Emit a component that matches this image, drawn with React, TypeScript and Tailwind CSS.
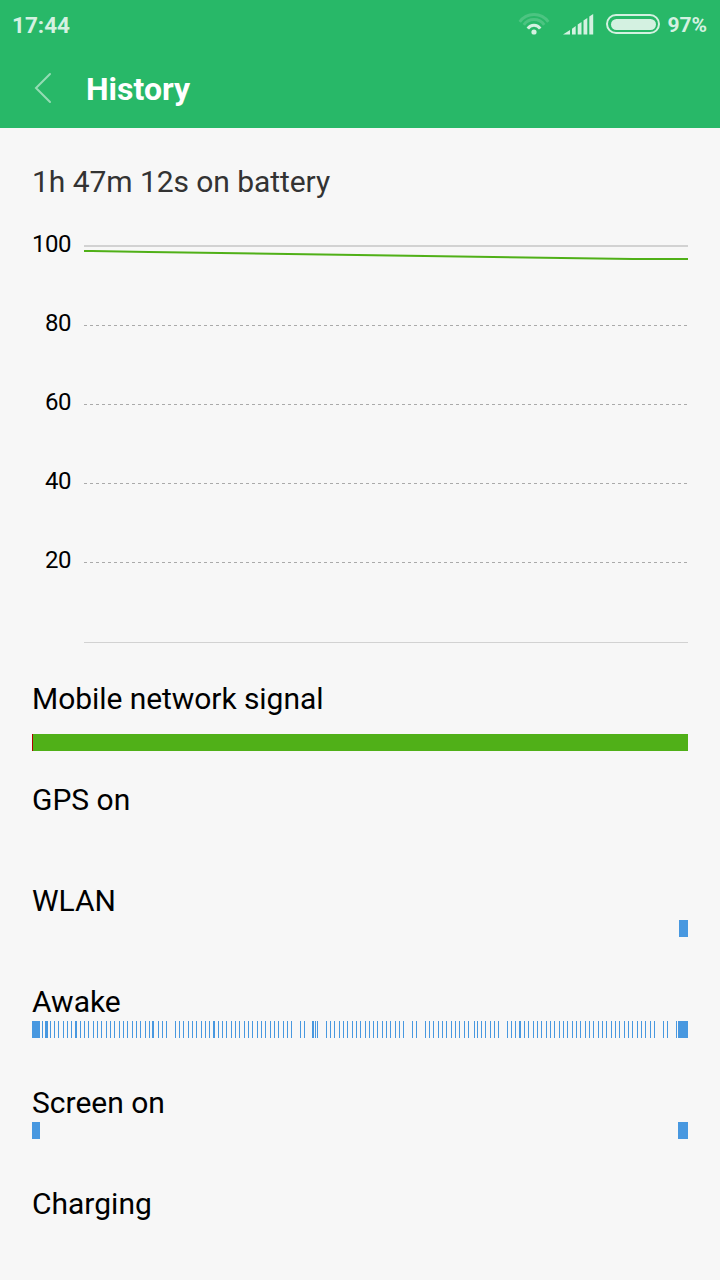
import React from 'react';

type Span = [start: number, width?: number];

interface HistoryRow {
  label: string;
  color: string;
  spans: Span[];
}

const LEVELS = [80, 60, 40, 20];

// offsets from the left edge of the 656px track
const AWAKE: Span[] = [
  [0, 8], [10], [13, 3], [18], [22], [26], [31], [35], [39], [43, 2], [48], [52], [56], [61], [65], [69],
  [74], [78], [82], [87], [91], [95], [100], [104], [108], [113], [117], [120, 2], [126], [130], [134],
  [143], [147], [151], [156], [160], [164], [169], [173], [177], [181, 2], [186], [190], [194], [199],
  [203], [207], [212], [216], [220], [225], [229], [233], [238], [242], [246], [251], [255], [259],
  [268], [272], [280, 2], [283], [285], [294], [298], [302], [307], [311], [315], [320], [324], [328],
  [333], [337], [341], [345], [350], [354], [358], [363], [367], [371], [380], [384], [393], [397],
  [401], [406], [410], [414], [419], [423], [427], [432], [436], [442], [445], [449], [453], [458],
  [462], [466], [475], [479], [483], [487, 2], [492], [496], [501], [505], [509], [514], [518], [522],
  [527], [531], [535], [540], [544], [548], [553], [557], [561], [566], [570], [574], [579], [583],
  [587], [592], [596], [600], [605], [609], [613], [618], [622], [631], [635], [644], [646, 10],
];

const ROWS: HistoryRow[] = [
  { label: 'GPS on', color: '#4898e0', spans: [] },
  { label: 'WLAN', color: '#4898e0', spans: [[647, 9]] },
  { label: 'Awake', color: '#4898e0', spans: AWAKE },
  { label: 'Screen on', color: '#4898e0', spans: [[0, 8], [646, 10]] },
  { label: 'Charging', color: '#4898e0', spans: [] },
];

const App: React.FC = () => (
  <div className="w-[720px] h-[1280px] bg-[#f7f7f7] font-[Roboto,sans-serif] text-black overflow-hidden">
    <header className="h-32 bg-[#28b868]">
      <StatusBar />
      <div className="h-[78px] flex items-center pl-[34px]">
        <svg className="mb-0.5" width="18" height="32" viewBox="0 0 18 32" fill="none">
          <path d="M16 2 L2 16 L16 30" stroke="#fff" strokeOpacity="0.5" strokeWidth="2" strokeLinecap="round" />
        </svg>
        <h1 className="ml-[34px] text-[32px] leading-[40px] font-bold text-white">History</h1>
      </div>
    </header>

    <main className="px-8">
      <h2 className="pt-[34px] text-[30px] leading-[40px] tracking-[-0.06px] text-[#333333]">1h 47m 12s on battery</h2>
      <BatteryChart />

      <section className="h-[101px] mt-[18px]">
        <p className="h-[38px] text-[30px] leading-[38px] tracking-[-0.06px]">Mobile network signal</p>
        <div className="mt-4 h-[17px] bg-[#50b018] border-l border-[#b00000]" />
      </section>
      {ROWS.map(row => (
        <section key={row.label} className="h-[101px]">
          <p className="h-[38px] text-[30px] leading-[38px]">{row.label}</p>
          <Track row={row} />
        </section>
      ))}
    </main>
  </div>
);

const StatusBar: React.FC = () => (
  <div className="h-[50px] flex items-center justify-between pl-3 pr-[13px] text-[#d4f1e1] font-bold">
    <span className="text-[22.5px] leading-[50px]">17:44</span>
    <div className="flex items-center">
      {/* wifi */}
      <svg className="mb-0.5" width="32" height="24" viewBox="0 0 32 24" fill="none">
        <path d="M1.7 9.8 A17.5 17.5 0 0 1 30.3 9.8" stroke="#fff" strokeOpacity="0.17" strokeWidth="3" />
        <path d="M5.8 12.8 A12.5 12.5 0 0 1 26.2 12.8" stroke="#fff" strokeOpacity="0.17" strokeWidth="3" />
        <path d="M9.8 16.6 A7.5 7.5 0 0 1 22.2 16.6" stroke="#d4f1e1" strokeWidth="3" />
        <circle cx="16" cy="20" r="2.6" fill="#d4f1e1" />
      </svg>
      {/* cell signal */}
      <svg className="ml-3 mb-0.5" width="32" height="22" viewBox="0 0 32 22" fill="#d4f1e1">
        <path d="M1 21.5 L8 17 V21.5 Z" />
        <path d="M10 15.8 L13.7 13 V21.5 H10 Z" />
        <path d="M15.7 11.5 L19.5 9 V21.5 H15.7 Z" />
        <path d="M21.5 7.5 L25.3 5 V21.5 H21.5 Z" />
        <path d="M27.3 3.5 L31.2 1 V21.5 H27.3 Z" />
      </svg>
      <div className="ml-3 mb-0.5 w-[54px] h-5 p-[2.5px] rounded-full border-2 border-[#d4f1e1]">
        <div className="h-full rounded-full bg-[#d4f1e1]" />
      </div>
      <span className="ml-[7px] text-[21px] leading-[50px]">97%</span>
    </div>
  </div>
);

const BatteryChart: React.FC = () => (
  <div className="flex h-[460px] pt-[22px]">
    <div className="w-[39px] text-right text-[24px] leading-[40px] tracking-[-0.5px]">
      <p className="h-[79px]">100</p>
      {LEVELS.map(level => (
        <p key={level} className="h-[79px]">{level}</p>
      ))}
    </div>
    <svg className="ml-[13px] mt-[21px]" width="604" height="400" viewBox="0 0 604 400" fill="none">
      <rect width="604" height="2" fill="#d2d2d2" />
      {LEVELS.map((level, i) => (
        <line key={level} x1="0" x2="604" y1={80.5 + i * 79} y2={80.5 + i * 79} stroke="#aaaaaa" strokeDasharray="3 3" />
      ))}
      <rect y="397" width="604" height="1" fill="#d2d2d2" />
      <polyline points="0,6 8,6 65,7 549,14 604,14" stroke="#50b018" strokeWidth="2" />
    </svg>
  </div>
);

const Track: React.FC<{ row: HistoryRow }> = ({ row }) => (
  <svg width="656" height="17" viewBox="0 0 656 17" fill={row.color} shapeRendering="crispEdges">
    {row.spans.map(([start, width = 1]) => (
      <rect key={start} x={start} width={width} height="17" />
    ))}
  </svg>
);

export default App;
